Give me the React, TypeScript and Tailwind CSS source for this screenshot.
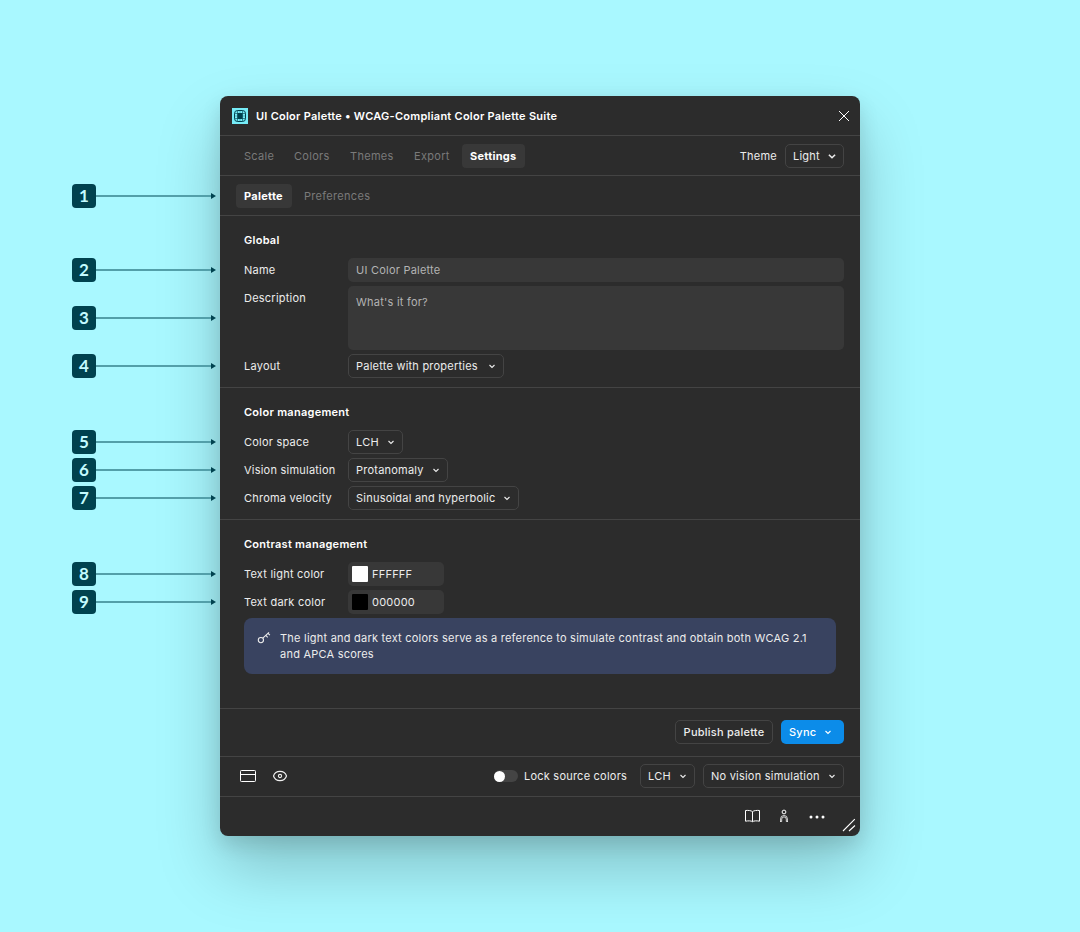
import React from 'react';

const markers = [
  { n: 1, gap: 'mt-0' },
  { n: 2, gap: 'mt-[50px]' },
  { n: 3, gap: 'mt-6' },
  { n: 4, gap: 'mt-6' },
  { n: 5, gap: 'mt-[52px]' },
  { n: 6, gap: 'mt-1' },
  { n: 7, gap: 'mt-1' },
  { n: 8, gap: 'mt-[52px]' },
  { n: 9, gap: 'mt-1' },
];

function Marker({ n, gap }: { n: number; gap: string }) {
  return (
    <div className={`flex h-6 items-center ${gap}`}>
      <div className="flex size-6 shrink-0 items-center justify-center rounded-[4px] bg-[#00424f] font-['Lato',sans-serif] text-[17px] leading-6 font-bold tracking-normal text-[#c4fbff]">
        {n}
      </div>
      <div className="h-[2px] w-[115px] bg-[#539fa9]" />
      <svg width="5" height="6" viewBox="0 0 5 6" className="shrink-0" fill="#00424f">
        <path d="M0 0 5 3 0 6Z" />
      </svg>
    </div>
  );
}

function Chevron({ bold = false }: { bold?: boolean }) {
  return (
    <svg width="8" height="8" viewBox="0 0 8 8" fill="none" stroke="currentColor" strokeWidth={bold ? 1.6 : 1.15} className="shrink-0">
      <path d={bold ? 'M0.9 2.7 4 5.7 7.1 2.7' : 'M1.5 3 4 5.4 6.5 3'} />
    </svg>
  );
}

function Select({ label, width, bold = false }: { label: string; width: string; bold?: boolean }) {
  return (
    <button
      className={`flex h-6 items-center justify-between rounded-[5px] border border-[#444444] pl-[7px] whitespace-nowrap ${bold ? 'pr-[7px]' : 'pr-[7.5px]'} ${width}`}
    >
      <span>{label}</span>
      <Chevron bold={bold} />
    </button>
  );
}

function Tab({ label, width, active = false }: { label: string; width: string; active?: boolean }) {
  return (
    <button
      className={`flex h-6 items-center rounded-[4px] px-2 ${width} ${active ? 'bg-[#383838] font-bold tracking-[0.27px] text-white' : 'tracking-[0.3px] text-[#7a7a7a]'}`}
    >
      {label}
    </button>
  );
}

function Row({ label, children }: { label: string; children: React.ReactNode }) {
  return (
    <div className="flex items-start">
      <div className="w-[104px] shrink-0 leading-6">{label}</div>
      {children}
    </div>
  );
}

function ColorField({ hex, swatch }: { hex: string; swatch: string }) {
  return (
    <div className="flex h-6 w-24 items-center gap-1 rounded-[5px] bg-[#383838] pl-1">
      <div className={`size-4 rounded-[1px] ${swatch}`} />
      <span>{hex}</span>
    </div>
  );
}

function Section({ title, children, className }: { title: string; children: React.ReactNode; className: string }) {
  return (
    <section className={`shrink-0 border-b border-[#444444] pt-3 pr-4 pl-6 ${className}`}>
      <h2 className="mb-[6px] h-6 leading-6 font-semibold tracking-[0.27px] text-white">{title}</h2>
      <div className="flex flex-col gap-1">{children}</div>
    </section>
  );
}

export default function App() {
  return (
    <div className="flex h-[932px] w-[1080px] overflow-hidden bg-[#a9f8ff] pt-24 font-['Inter',sans-serif] text-[11px] leading-4 tracking-[0.225px] text-[#ececec]">
      <div className="relative z-10 ml-[72px] flex w-[148px] flex-col pt-[88px]">
        {markers.map((m) => (
          <Marker key={m.n} n={m.n} gap={m.gap} />
        ))}
      </div>
      <main className="flex h-[740px] w-[640px] flex-col rounded-[8px] bg-[#2c2c2c] shadow-[0_8px_20px_rgba(0,0,0,0.12),0_32px_64px_rgba(0,0,0,0.22)]">
        <header className="flex h-10 shrink-0 items-center border-b border-[#444444] pr-[10px] pl-3">
          <svg width="16" height="16" viewBox="0 0 16 16" fill="none" stroke="#00424f" strokeWidth="0.6">
            <rect width="16" height="16" fill="#76ecf8" stroke="none" />
            <rect x="2.5" y="2.5" width="11" height="11" rx="3" strokeWidth="1" />
            <path d="M5.5 2.5v11M10.5 2.5v11M2.5 5.5h11M2.5 10.5h11" />
            <path d="M8 2.5v11M2.5 8h11" strokeOpacity="0.6" />
            <rect x="5.5" y="5" width="5" height="6" rx="1" fill="#00424f" stroke="none" />
          </svg>
          <h1 className="ml-2 flex-1 font-semibold tracking-[0.255px] text-white">UI Color Palette • WCAG-Compliant Color Palette Suite</h1>
          <svg width="12" height="12" viewBox="0 0 12 12" fill="none" stroke="#fff" strokeWidth="1">
            <path d="M1 1 11 11M11 1 1 11" />
          </svg>
        </header>
        <nav className="flex h-10 shrink-0 items-center gap-1 border-b border-[#444444] px-4">
          <Tab label="Scale" width="w-[46px]" />
          <Tab label="Colors" width="w-[52px]" />
          <Tab label="Themes" width="w-[60px]" />
          <Tab label="Export" width="w-[52px]" />
          <Tab label="Settings" width="w-[63px]" active />
          <span className="mr-1 ml-auto tracking-[0.23px]">Theme</span>
          <Select label="Light" width="w-[59px]" bold />
        </nav>
        <nav className="flex h-10 shrink-0 items-center gap-1 border-b border-[#444444] px-4">
          <Tab label="Palette" width="w-14" active />
          <Tab label="Preferences" width="w-[82px]" />
        </nav>
        <Section title="Global" className="h-[172px]">
          <Row label="Name">
            <div className="h-6 w-[496px] rounded-[5px] bg-[#383838] px-2 leading-6 text-[#b3b3b3]">UI Color Palette</div>
          </Row>
          <Row label="Description">
            <div className="h-16 w-[496px] rounded-[5px] bg-[#383838] px-2 py-2 text-[#b3b3b3]">What's it for?</div>
          </Row>
          <Row label="Layout">
            <Select label="Palette with properties" width="w-[156px]" />
          </Row>
        </Section>
        <Section title="Color management" className="h-[132px]">
          <Row label="Color space">
            <Select label="LCH" width="w-[55px]" />
          </Row>
          <Row label="Vision simulation">
            <Select label="Protanomaly" width="w-[100px]" />
          </Row>
          <Row label="Chroma velocity">
            <Select label="Sinusoidal and hyperbolic" width="w-[171px]" />
          </Row>
        </Section>
        <Section title="Contrast management" className="h-[189px]">
          <Row label="Text light color">
            <ColorField hex="FFFFFF" swatch="bg-white" />
          </Row>
          <Row label="Text dark color">
            <ColorField hex="000000" swatch="bg-black" />
          </Row>
          <div className="flex h-14 w-[592px] items-start rounded-[8px] bg-[#394360] py-3">
            <svg width="16" height="16" viewBox="0 0 16 16" fill="none" stroke="currentColor" strokeWidth="1.1" className="ml-3 shrink-0">
              <circle cx="4.9" cy="10.1" r="2.6" />
              <path d="M6.8 8.2 13 2.3M9.8 5.4l1.9 1.9M12 3.3l1.9 1.9" />
            </svg>
            <p className="ml-2 w-[540px]">
              The light and dark text colors serve as a reference to simulate contrast and obtain both WCAG 2.1
              <br />
              and APCA scores
            </p>
          </div>
        </Section>
        <div className="flex h-12 shrink-0 items-center justify-end gap-2 border-b border-[#444444] pr-4 pb-px font-medium">
          <button className="h-6 w-[98px] rounded-[5px] border border-[#444444] whitespace-nowrap">Publish palette</button>
          <button className="flex h-6 w-[63px] items-center justify-between rounded-[5px] bg-[#0c8ce9] pr-[12.5px] pl-2 text-white">
            Sync
            <Chevron />
          </button>
        </div>
        <div className="flex h-10 shrink-0 items-center border-b border-[#444444] pr-4 pb-px pl-5">
          <svg width="16" height="12" viewBox="0 0 16 12" fill="none" stroke="#fff">
            <rect x="0.5" y="0.5" width="15" height="11" rx="0.8" />
            <path d="M0.5 4.5h15" />
          </svg>
          <svg width="16" height="12" viewBox="0 0 16 12" fill="none" stroke="#f0f0f0" strokeWidth="1.1" className="ml-4">
            <path d="M1.5 6C2.5 2.9 5 1.4 8 1.4S13.5 2.9 14.5 6C13.5 9.1 11 10.6 8 10.6S2.5 9.1 1.5 6Z" />
            <circle cx="8" cy="6" r="1.6" />
          </svg>
          <div className="ml-auto flex h-3 w-6 items-center rounded-full bg-[#444444]">
            <div className="size-[11px] rounded-full bg-white" />
          </div>
          <span className="ml-[6px] w-[116px] whitespace-nowrap">Lock source colors</span>
          <Select label="LCH" width="w-[55px]" />
          <div className="w-2" />
          <Select label="No vision simulation" width="w-[141px]" />
        </div>
        <footer className="flex h-[39px] shrink-0 items-center justify-end">
          <svg width="16" height="14" viewBox="0 0 16 14" fill="none" stroke="#fff" className="mb-px">
            <path d="M8.5 2.7C7.3 1.5 4 1.2 1.5 1.5V12.2C4 11.7 7.3 11.7 8.5 12.7 9.7 11.7 13 11.7 15.5 12.2V1.5C13 1.2 9.7 1.5 8.5 2.7ZM8.5 2.7V12.7" />
          </svg>
          <svg width="10" height="14" viewBox="0 0 10 14" fill="none" stroke="#fff" className="mb-px ml-[19px]">
            <circle cx="5" cy="3" r="1.9" />
            <path d="M1 12.5H2.7V10.2a2.3 2.3 0 0 1 4.6 0V12.5H9M1.6 12.5V9.9a3.4 3.4 0 0 1 6.8 0V12.5" strokeWidth="0.8" />
          </svg>
          <svg width="16" height="4" viewBox="0 0 16 4" fill="#fff" className="ml-[19.5px]">
            <circle cx="2" cy="2" r="1.5" />
            <circle cx="8" cy="2" r="1.5" />
            <circle cx="14" cy="2" r="1.5" />
          </svg>
          <svg width="14" height="14" viewBox="0 0 14 14" fill="none" stroke="#fff" strokeWidth="1.1" className="mt-[17px] mr-[4px] ml-[17.5px]">
            <path d="M1 13 12.8 1.2M7 13 13 7.5" />
          </svg>
        </footer>
      </main>
    </div>
  );
}
